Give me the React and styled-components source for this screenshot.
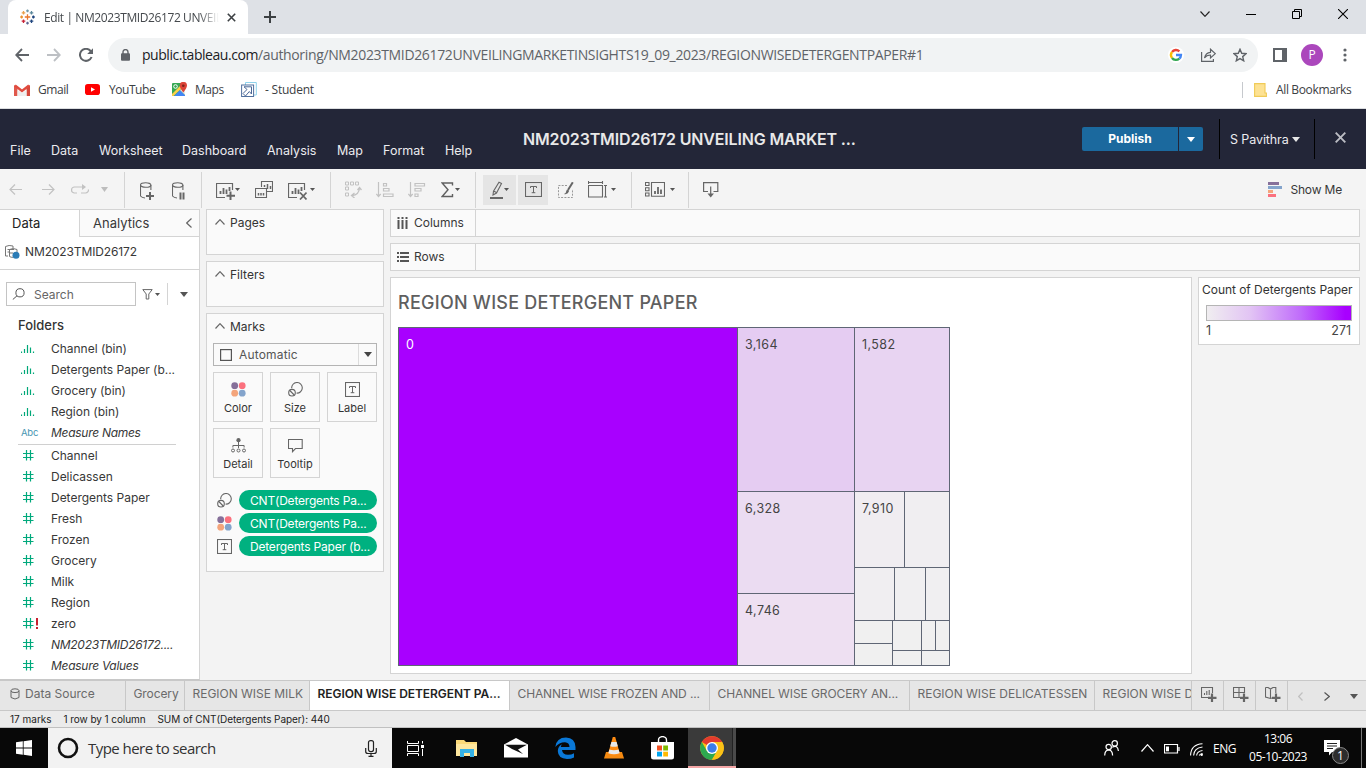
import React from "react";
import styled, { createGlobalStyle, css } from "styled-components";

const ui = '"Open Sans", "Noto Sans", sans-serif';
const body = 'Inter, "Liberation Sans", sans-serif';

const Global = createGlobalStyle`
  *, *::before, *::after { box-sizing: border-box; }
  html, body { margin: 0; padding: 0; overflow: hidden; }
  body { font-family: ${body}; font-size: 12px; color: #383838; background: #f3f3f3; }
  svg { display: block; flex: none; }
`;

const Page = styled.div`
  width: 1366px; height: 768px; overflow: hidden;
  display: flex; flex-direction: column;
`;
const Spacer = styled.div`flex: 1;`;
const Text = styled.span`
  white-space: pre;
  letter-spacing: ${(p) => p.$ls || 0}px;
`;
const Slot = styled.span`
  flex: none; display: flex; align-items: center;
  margin-left: ${(p) => p.$l || 0}px;
  padding-top: ${(p) => p.$t || 0}px;
`;

function Icon({ w, h, children, ...rest }) {
  return <svg width={w} height={h} viewBox={`0 0 ${w} ${h}`} fill="none" {...rest}>{children}</svg>;
}

/* ---------- browser chrome ---------- */
const TabStrip = styled.div`
  flex: none; height: 34px; background: #dee1e6; display: flex; align-items: flex-start; font-family: ${ui};
`;
const BrowserTab = styled.div`
  width: 240px; height: 34px; margin-left: 8px; padding-left: 12px;
  background: #fff; border-radius: 8px 8px 0 0; display: flex; align-items: center;
  font-size: 12px; color: #45494d;
`;
const TabTitle = styled.div`
  margin-left: 9px; width: 176px; overflow: hidden; white-space: pre; letter-spacing: -0.4px;
  mask-image: linear-gradient(90deg, #000 155px, transparent 175px);
`;
const AddressRow = styled.div`
  flex: none; height: 41px; background: #fff; display: flex; align-items: center;
`;
const Omnibox = styled.div`
  width: 1150px; height: 34px; margin-left: 14px; border-radius: 17px; background: #f1f3f4;
  display: flex; align-items: center; padding-left: 13px; font: 14px ${ui}; color: #5f6368;
  b { font-weight: 400; color: #202124; letter-spacing: -0.45px; }
`;
const Avatar = styled.div`
  width: 22px; height: 22px; border-radius: 50%; background: #ab47bc; color: #fff;
  display: flex; align-items: center; justify-content: center; font: 12px ${ui};
  margin-left: 14px;
`;
const Bookmarks = styled.div`
  flex: none; height: 34px; background: #fff; border-bottom: 1px solid #dcdee0;
  display: flex; align-items: center; padding-bottom: 4px; font: 12px ${ui}; color: #3c4043;
`;
const Bookmark = styled.div`
  display: flex; align-items: center; gap: ${(p) => p.$gap}px; margin-left: ${(p) => p.$l || 0}px;
  width: ${(p) => p.$w}px; letter-spacing: ${(p) => p.$ls || -0.45}px; white-space: pre;
`;
const VLine = styled.div`
  flex: none; width: 1px; height: ${(p) => p.$h}px; background: ${(p) => p.$c || "#d4d4d4"};
  margin-left: ${(p) => p.$l || 0}px; margin-right: ${(p) => p.$r || 0}px;
`;

/* ---------- app header ---------- */
const Header = styled.header`
  flex: none; height: 60px; background: #232638; color: #ececf0; display: flex;
`;
const Menu = styled.nav`
  display: flex; width: 523px; padding: 34px 0 0 10px; font-size: 12.5px; line-height: 16px;
`;
const MenuItem = styled.span`width: ${(p) => p.$w}px;`;
const BookTitle = styled.h1`
  margin: 0; width: 559px; padding-top: 20px; font-size: 16px; line-height: 20px; font-weight: 600;
  letter-spacing: -0.15px; color: #e8e8e8; white-space: pre;
`;
const Publish = styled.button`
  margin: 18px 1px 0 0; padding: 0 0 1px; width: 96px; height: 24px; border: 0; border-radius: 2px 0 0 2px;
  background: #1b699e; color: #fff; font: bold 12px ${body};
`;
const PublishMore = styled.div`
  margin-top: 18px; width: 24px; height: 24px; border-radius: 0 2px 2px 0; background: #1b699e;
  display: flex; align-items: center; justify-content: center;
`;
const User = styled.div`
  width: 96px; height: 40px; margin: 10px 0 0 16px; padding-left: 10px;
  border-left: 1px solid #000; border-right: 1px solid #000;
  display: flex; align-items: center; gap: 3px; font-size: 12.5px; letter-spacing: -0.1px;
`;

/* ---------- toolbar ---------- */
const Toolbar = styled.div`
  flex: none; height: 40px; background: #f4f4f4; display: flex; align-items: center; padding-top: 1px;
`;
const ToolButton = styled.div`
  height: 30px; width: ${(p) => p.$w}px; margin-left: ${(p) => p.$l}px; background: #e5e5e5;
  display: flex; align-items: center; justify-content: center; gap: 1px;
`;

const Caret = ({ w = 5, h = 3, c = "#555" }) => (
  <Icon w={w} h={h}><path d={`M0 0H${w}L${w / 2} ${h}Z`} fill={c} /></Icon>
);

/* ---------- workspace ---------- */
const Workspace = styled.div`flex: none; height: 471px; display: flex; background: #f3f3f3;`;
const DataPane = styled.aside`
  width: 200px; height: 471px; background: #fff; border-right: 1px solid #d4d4d4; border-bottom: 1px solid #c8c8c8;
`;
const PaneTabs = styled.div`display: flex; height: 28px; font-size: 13px;`;
const PaneTab = styled.div`
  display: flex; align-items: center; border-top: 1px solid #d4d4d4;
  ${(p) => p.$active
    ? css`width: 79px; padding: 0 0 1px 12px; color: #222;`
    : css`width: 120px; padding: 0 7px 0 13px; justify-content: space-between; background: #fafafa; border-left: 1px solid #d4d4d4; border-bottom: 1px solid #d4d4d4;`}
`;
const Source = styled.div`
  height: 33px; border-bottom: 1px solid #d4d4d4; display: flex; align-items: center; padding: 0 0 3px 5px; gap: 5px;
`;
const SearchRow = styled.div`display: flex; align-items: center; margin: 12px 0 0 6px; height: 24px;`;
const SearchBox = styled.div`
  width: 130px; height: 24px; border: 1px solid #c4c4c4; display: flex; align-items: center; gap: 9px; padding-left: 5px; color: #666;
`;
const FolderTitle = styled.div`padding: 11px 0 0 18px; font-size: 13px; font-weight: 500; line-height: 16px; height: 32px; color: #333;`;
const Field = styled.div`
  height: 21px; display: flex; align-items: center; font-style: ${(p) => (p.$italic ? "italic" : "normal")};
  letter-spacing: ${(p) => (p.$italic ? -0.28 : -0.02)}px;
`;
const FieldIcon = styled.div`
  width: 51px; padding-left: ${(p) => p.$pad || 23}px; display: flex; gap: 2px; letter-spacing: 0;
`;
const TypeTag = styled.span`font: normal 9.5px ${body}; color: #4996b2; margin-left: -2px; letter-spacing: -0.2px;`;
const Rule = styled.div`height: 1px; width: 158px; background: #d0d0d0; margin: 1px 0 0 18px;`;

const Cards = styled.div`width: 178px; margin-left: 6px; display: flex; flex-direction: column; gap: 6px;`;
const Card = styled.section`
  height: ${(p) => p.$h}px; border: 1px solid #d4d4d4; background: #fafafa;
`;
const CardTitle = styled.div`
  display: flex; align-items: center; gap: 5px; padding: 0 0 2px 8px; height: 26px; color: #333;
`;
const MarkType = styled.div`
  margin: 3px 0 0 6px; width: 164px; height: 23px; border: 1px solid #b4b4b4; display: flex; align-items: center;
  padding-left: 6px; color: #555;
`;
const MarkTypeMore = styled.div`
  margin-left: auto; width: 18px; height: 21px; border-left: 1px solid #dcdcdc; display: flex; align-items: center; justify-content: center;
`;
const MarkGrid = styled.div`
  display: grid; grid-template-columns: repeat(3, 50px); gap: 6px 7px; margin: 6px 0 0 6px;
`;
const MarkButton = styled.div`
  height: 50px; border: 1px solid #d4d4d4; display: flex; flex-direction: column; align-items: center;
  font-size: 11px; padding-top: 9px; gap: 5px; color: #333; line-height: 13px;
`;
const MarkIcon = styled.div`height: 15px;`;
const Pills = styled.div`margin: 12px 0 0 10px; display: flex; flex-direction: column; gap: 3px;`;
const PillRow = styled.div`display: flex; align-items: center; height: 20px;`;
const Pill = styled.div`
  margin-left: 7px; width: 138px; height: 20px; border-radius: 10px; background: #00b180; color: #fff;
  line-height: 21px; padding-left: 11px; letter-spacing: -0.2px; white-space: pre;
`;

const Stage = styled.main`width: 970px; margin-left: 6px; display: flex; flex-direction: column; gap: 6px;`;
const Shelf = styled.div`height: 28px; border: 1px solid #d4d4d4; background: #fafafa; display: flex;`;
const ShelfLabel = styled.div`
  width: 85px; border-right: 1px solid #d4d4d4; display: flex; align-items: center; gap: 5px; padding: 0 0 1px 6px;
`;
const StageRow = styled.div`display: flex; gap: 6px;`;
const Viz = styled.section`width: 802px; height: 397px; background: #fff; border: 1px solid #d4d4d4; padding: 0 0 0 7px;`;
const VizTitle = styled.h2`
  margin: 0; height: 49px; padding: 14px 0 0 0; font-size: 18px; line-height: 22px; font-weight: 500; color: #5f5f5f; letter-spacing: 0.25px;
`;
const Legend = styled.section`
  width: 162px; height: 68px; background: #fff; border: 1px solid #d4d4d4; padding: 4px 7px 0 3px; white-space: pre; line-height: 16px; color: #333;
  letter-spacing: -0.04px;
`;
const Ramp = styled.div`
  margin: 7px 0 0 4px; width: 146px; height: 16px; border: 1px solid #b5b5b5;
  background: linear-gradient(90deg, #f0eef0, #e2c4f4 30%, #c06cfb 65%, #a800ff 96%);
`;
const RampEnds = styled.div`display: flex; justify-content: space-between; margin: 2px 1px 0 4px; font-size: 12.5px; color: #444;`;

/* ---------- sheet tabs and status ---------- */
const Sheets = styled.div`flex: none; height: 31px; display: flex; background: #e6e6e6; border-top: 1px solid #c8c8c8; border-bottom: 1px solid #c8c8c8;`;
const Sheet = styled.div`
  flex: none; width: ${(p) => p.$w}px; border-right: ${(p) => (p.$last ? 0 : 1)}px solid #c8c8c8; padding: 4px 0 0 7.5px; line-height: 17px;
  overflow: hidden; white-space: pre; color: #6a6a6a; letter-spacing: ${(p) => p.$ls || 0}px;
  ${(p) => p.$active && css`background: #fff; color: #222; font-weight: 600;`}
  ${(p) => p.$source && css`display: flex; align-items: flex-start; gap: 5px; padding-left: 10px;`}
`;
const NewSheet = styled.div`
  width: 32px; border-left: 1px solid #c8c8c8; display: flex; padding: 6px 0 0 9px;
`;
const SheetNav = styled.div`width: 78px; border-left: 1px solid #c8c8c8; display: flex; align-items: center; padding: 1px 0 0 10px;`;
const Status = styled.div`
  flex: none; height: 17px; background: #ebebeb; border-bottom: 1px solid #c0c0c0; display: flex; align-items: center; font-size: 10px; padding-left: 10px; color: #222;
`;

/* ---------- taskbar ---------- */
const Taskbar = styled.footer`flex: none; height: 40px; background: #080808; display: flex; align-items: center; color: #fff; font: 12px ${ui};`;
const Start = styled.div`width: 48px; display: flex; justify-content: center;`;
const TaskSearch = styled.div`
  width: 344px; height: 40px; background: #f2f2f2; color: #333; font-size: 15px; letter-spacing: -0.55px;
  display: flex; align-items: center; padding: 0 15px 0 9px;
`;
const ActiveTask = styled.div`
  width: 48px; height: 40px; margin-left: 13px; background: linear-gradient(90deg, #3a3a3a 44px, #222 44px, #222 45px, #4a4a4a 45px);
  border-bottom: 2px solid #f4a6a6; display: flex; align-items: center; justify-content: center; padding-top: 2px;
`;
const Clock = styled.div`
  width: 66px; margin-left: 9px; text-align: center; line-height: 18px; letter-spacing: -0.47px;
`;
const Notice = styled.div`position: relative; margin-left: 13px; width: 37px; height: 40px; padding-top: 12px;`;
const NoticeCount = styled.div`
  position: absolute; left: 8px; top: 19px; width: 17px; height: 17px; border-radius: 50%; background: #2d2d2d;
  border: 1px solid #8a8a8a; font-size: 12px; line-height: 15px; text-align: center;
`;

/* ---------- drawings ---------- */
const TableauMark = () => {
  const plus = (x, y, r, c, k) => <path key={k} d={`M${x - r} ${y}H${x + r}M${x} ${y - r}V${y + r}`} stroke={c} strokeWidth="1.3" />;
  return (
    <Icon w={15} h={16}>
      {plus(7.5, 8, 2.7, "#e8762c", 0)}
      {plus(3.5, 3.8, 1.8, "#e8a04c", 1)}{plus(11.5, 3.8, 1.8, "#5b879b", 2)}
      {plus(3.5, 12.2, 1.8, "#c72035", 3)}{plus(11.5, 12.2, 1.8, "#1f457e", 4)}
      {plus(7.5, 1.8, 1.4, "#7199a6", 5)}{plus(7.5, 14.2, 1.4, "#5c6692", 6)}
      {plus(1.6, 8, 1.4, "#eb912c", 7)}{plus(13.4, 8, 1.4, "#1f457e", 8)}
    </Icon>
  );
};
const Chevron = ({ c = "#666", dir = "up", w = 9, h = 5 }) => {
  const d = { up: `M.5 ${h - 0.5}L${w / 2} .7L${w - 0.5} ${h - 0.5}`, left: `M${w - 0.5} .5L.7 ${h / 2}L${w - 0.5} ${h - 0.5}`, right: `M.5 .5L${w - 0.7} ${h / 2}L.5 ${h - 0.5}`, down: `M.5 .5L${w / 2} ${h - 0.7}L${w - 0.5} .5` };
  return <Icon w={w} h={h}><path d={d[dir]} stroke={c} strokeWidth="1.2" /></Icon>;
};
const DotsColor = () => (
  <Icon w={15} h={15}>
    <circle cx="3.7" cy="3.7" r="3.4" fill="#86709a" /><circle cx="11.2" cy="3.7" r="3.4" fill="#fb717e" />
    <circle cx="3.7" cy="11.2" r="3.4" fill="#f4a57c" /><circle cx="11.2" cy="11.2" r="3.4" fill="#84a4cc" />
  </Icon>
);
const SizeMark = () => (
  <Icon w={15} h={15} stroke="#666" strokeWidth="1.1">
    <path d="M3.7 6.2A5.3 5.3 0 1 1 8.6 11.1" /><circle cx="4" cy="10.7" r="3.3" /><path d="M1.8 8.5L6.2 13" />
  </Icon>
);
const LabelMark = ({ w = 15, h = 15 }) => (
  <Icon w={w} h={h} stroke="#666">
    <rect x=".5" y=".5" width={w - 1} height={h - 1} strokeWidth="1.1" />
    <path d={`M${w / 2 - 3} ${h / 2 - 1.5}V${h / 2 - 3}H${w / 2 + 3}V${h / 2 - 1.5}M${w / 2} ${h / 2 - 3}V${h / 2 + 3.4}M${w / 2 - 1.8} ${h / 2 + 3.2}H${w / 2 + 1.8}`} />
  </Icon>
);
const DetailMark = () => (
  <Icon w={15} h={15} stroke="#666">
    <circle cx="7.5" cy="2.2" r="2.1" fill="#666" stroke="none" />
    <path d="M7.5 4V10M1.9 9.5V7.5H13.1V9.5" />
    <circle cx="2" cy="12.5" r="1.5" /><circle cx="7.5" cy="12.5" r="1.5" /><circle cx="13" cy="12.5" r="1.5" />
  </Icon>
);
const TooltipMark = () => (
  <Icon w={15} h={15} stroke="#666" strokeWidth="1.1"><path d="M.5 1.5H14.2V10.5H7.5L4.5 13.7V10.5H.5Z" /></Icon>
);
const BinMark = () => (
  <Icon w={14} h={9}><path d="M.5 7.5V9M3.5 5V9M6.5 1V9M9.5 3.5V9M12.5 7.5V9" stroke="#00a878" strokeWidth="1.2" /></Icon>
);
const Hash = () => (
  <Icon w={11} h={11}><path d="M3.5 0V10.5M7.5 0V10.5M0 3.5H10.5M0 7.5H10.5" stroke="#00a97c" strokeWidth="1.2" /></Icon>
);
const Cylinder = ({ extra }) => (
  <Icon w={15} h={18} stroke="#666" strokeWidth="1.1">
    <ellipse cx="5.7" cy="3" rx="5.2" ry="2.3" /><path d="M.5 3V14Q2 15.7 5 16M10.9 3V8" />{extra}
  </Icon>
);
const ChartBox = ({ extra, w = 19 }) => (
  <Icon w={w} h={18} stroke="#666">
    <path d="M9 15.5H.5V1.5H16.5V8" strokeWidth="1.2" />
    <path d="M4.5 12V9M7.5 12V6M10.5 12V7.5M13.5 9V5" strokeWidth="1.8" />{extra}
  </Icon>
);
const NewMark = ({ kind }) => (
  <Icon w={16} h={15} stroke="#666" strokeWidth="1.1">
    {kind === "sheet" && <path d="M11.5 6V.5H.5V10.5H7M3.5 8V6M5.8 8V4M8.2 8V3" />}
    {kind === "board" && <path d="M11.5 6V.5H.5V10.5H7M.5 5.5H11M6 .5V10.5" />}
    {kind === "story" && <path d="M.5 .5V10L5.5 11.5L7 11M5.5 2V11M.5 .5H3L5.5 2L8 .5H10.8V6" />}
    <path d="M11 6.5V15M7 10.8H15.5" strokeWidth="2.2" />
  </Icon>
);
const Chrome = () => (
  <svg width="24" height="24" viewBox="0 0 48 48">
    <circle cx="24" cy="24" r="23.5" fill="#fbc116" />
    <path d="M24 24L3.6 12.2A23.5 23.5 0 0 1 44.4 12.2L24 12.2Z" fill="#e33b2e" />
    <path d="M3.6 12.2A23.5 23.5 0 0 0 24 47.5L34.2 29.9L24 24L13.8 29.9Z" fill="#2da94f" />
    <path d="M24 12.2H44.4A23.5 23.5 0 0 1 24 47.5L34.2 29.9Z" fill="#fbc116" />
    <circle cx="24" cy="24" r="12" fill="#fff" /><circle cx="24" cy="24" r="9.4" fill="#3b7de9" />
  </svg>
);

/* ---------- data ---------- */
const menu = [["File", 41], ["Data", 48], ["Worksheet", 83], ["Dashboard", 85], ["Analysis", 70], ["Map", 46], ["Format", 62], ["Help", 40]];
const bins = ["Channel (bin)", "Detergents Paper (b...", "Grocery (bin)", "Region (bin)"];
const measures = ["Channel", "Delicassen", "Detergents Paper", "Fresh", "Frozen", "Grocery", "Milk", "Region", "zero", "NM2023TMID26172....", "Measure Values"];
const cells = [
  [0, 0, 339, 338, "#a800ff", "0"],
  [339, 0, 117, 164, "#e5ccf2", "3,164"], [456, 0, 95, 164, "#e8d4f2", "1,582"],
  [339, 164, 117, 102, "#ebdcf2", "6,328"], [339, 266, 117, 72, "#eee0f2", "4,746"],
  [456, 164, 50, 76, "#f0edf1", "7,910"], [506, 164, 45, 76, "#f0eef1"],
  [456, 240, 40, 53, "#f0eef1"], [496, 240, 31, 53, "#f0eff1"], [527, 240, 24, 53, "#f0eff1"],
  [456, 293, 38, 23], [456, 316, 38, 22], [494, 293, 29, 30], [494, 323, 29, 15],
  [523, 293, 14, 30], [537, 293, 14, 30], [523, 323, 28, 15],
];
const sheets = [
  ["Grocery", 59, -0.1], ["REGION WISE MILK", 125, -0.02], ["REGION WISE DETERGENT PA...", 200, -0.06, true],
  ["CHANNEL WISE FROZEN AND ...", 200, -0.12], ["CHANNEL WISE GROCERY AN...", 200, -0.1], ["REGION WISE DELICATESSEN", 185, -0.02],
];

export default function App() {
  return (
    <Page>
      <Global />
      <TabStrip>
        <BrowserTab>
          <TableauMark />
          <TabTitle>Edit | NM2023TMID26172 UNVEILING</TabTitle>
          <Slot $l={7}><Icon w={9} h={9}><path d="M.8 .8L8.2 8.2M8.2 .8L.8 8.2" stroke="#3c4043" strokeWidth="1.6" /></Icon></Slot>
        </BrowserTab>
        <Slot $l={16} $t={11}><Icon w={12} h={12}><path d="M6 0V12M0 6H12" stroke="#3c4043" strokeWidth="2" /></Icon></Slot>
        <Spacer />
        <Slot $t={11}><Chevron dir="down" w={10} h={6} c="#222" /></Slot>
        <Slot $l={36} $t={14}><Icon w={10} h={1}><path d="M0 .5H10" stroke="#000" /></Icon></Slot>
        <Slot $l={36} $t={9}><Icon w={10} h={10} stroke="#000"><path d="M.5 2.5H7.5V9.5H.5ZM2.5 2.5V.5H9.5V7.5H7.5" /></Icon></Slot>
        <Slot $l={36} $t={9}><Icon w={10} h={10} stroke="#000"><path d="M0 0L10 10M10 0L0 10" strokeWidth="1.1" /></Icon></Slot>
        <Slot $l={18} />
      </TabStrip>

      <AddressRow>
        <Slot $l={15}><Icon w={14} h={14} stroke="#5f6368" strokeWidth="1.8"><path d="M14 7H1.5M7 1L1.2 7L7 13" /></Icon></Slot>
        <Slot $l={18}><Icon w={14} h={14} stroke="#bdc0c4" strokeWidth="1.8"><path d="M0 7H12.5M7 1L12.8 7L7 13" /></Icon></Slot>
        <Slot $l={18}><Icon w={15} h={14} stroke="#5f6368" strokeWidth="2"><path d="M12.6 9A6 6 0 1 1 11.6 3L13 4.5" /><path d="M14 .2V6H8.2Z" fill="#5f6368" stroke="none" /></Icon></Slot>
        <Omnibox>
          <Icon w={9} h={12}><rect x="0" y="4.3" width="9" height="7.5" rx="1" fill="#5f6368" /><path d="M2 5V3A2.5 2.4 0 0 1 7 3V5" stroke="#5f6368" strokeWidth="1.4" /></Icon>
          <Slot $l={12} /><b>public.tableau.com</b>
          <Text $ls={-0.35}>/authoring/NM2023TMID26172UNVEILINGMARKETINSIGHTS19_09_2023/REGIONWISEDETERGENTPAPER#1</Text>
          <Spacer />
          <svg width="16" height="16" viewBox="0 0 16 16"><circle cx="8" cy="8" r="8" fill="#fff" />
            <g fill="none" strokeWidth="2.3"><path d="M4 5A5 5 0 0 1 11.4 4.3" stroke="#ea4335" /><path d="M4 5A5 5 0 0 0 4 11" stroke="#fbbc05" /><path d="M4 11A5 5 0 0 0 11.3 11.7" stroke="#34a853" /><path d="M11.3 11.7A5 5 0 0 0 13 8H8" stroke="#4285f4" /></g>
          </svg>
          <Slot $l={17}><Icon w={15} h={14} stroke="#5f6368" strokeWidth="1.2"><path d="M.6 4V13.4H12.4V11M3.5 10Q4.5 4.7 9.5 4.3V1.2L14.3 5.6L9.5 10V7Q5.5 7 3.5 10Z" /></Icon></Slot>
          <Slot $l={17}><Icon w={14} h={14} stroke="#5f6368" strokeWidth="1.4"><path d="M7 1.3L8.7 5.3L13 5.7L9.7 8.6L10.7 12.8L7 10.6L3.3 12.8L4.3 8.6L1 5.7L5.3 5.3Z" /></Icon></Slot>
          <Slot $l={11} />
        </Omnibox>
        <Slot $l={15}><Icon w={14} h={14}><path d="M1 1H13V13H1Z" stroke="#5f6368" strokeWidth="2" /><path d="M9 0H14V14H9Z" fill="#5f6368" /></Icon></Slot>
        <Avatar>P</Avatar>
        <Slot $l={20}><Icon w={4} h={14} fill="#5f6368"><circle cx="2" cy="2" r="1.6" fill="#5f6368" /><circle cx="2" cy="7" r="1.6" fill="#5f6368" /><circle cx="2" cy="12" r="1.6" fill="#5f6368" /></Icon></Slot>
      </AddressRow>

      <Bookmarks>
        <Bookmark $l={14} $w={71} $gap={8}>
          <Icon w={16} h={12}><path d="M0 1V12H3.5V3Z" fill="#e0584c" /><path d="M16 1V12H12.5V3Z" fill="#d5473b" /><path d="M3.5 6V12H12.5V6L8 9Z" fill="#eee" /><path d="M1 1.5L8 7L15 1.5" stroke="#e04b3e" strokeWidth="2.4" /></Icon>Gmail
        </Bookmark>
        <Bookmark $w={87} $gap={9}>
          <Icon w={15} h={11}><rect width="15" height="11" rx="2.8" fill="#f00" /><path d="M6 3.2L10 5.5L6 7.8Z" fill="#fff" /></Icon>YouTube
        </Bookmark>
        <Bookmark $w={69} $gap={8}>
          <Icon w={15} h={15}><rect y="1" width="13" height="13" rx="1" fill="#34a853" /><path d="M2 14L8 8L13 13V14Z" fill="#4285f4" /><path d="M8 8L11 5L13 8V13Z" fill="#e8e8e8" /><path d="M0 12L10 2L12 4L1.5 14H0Z" fill="#fbd04a" /><circle cx="3.5" cy="4.5" r="1.8" stroke="#fff" /><path d="M11.3 10.5Q7.7 6 7.7 3.6A3.6 3.6 0 0 1 15 3.6Q15 6 11.3 10.5Z" fill="#dc4437" /><circle cx="11.3" cy="3.7" r="1.3" fill="#7c231c" /></Icon>Maps
        </Bookmark>
        <Bookmark $w={90} $gap={8} $ls={-0.22}>
          <Icon w={16} h={15}><path d="M4.5 3V.5H15.3V13H13" stroke="#8fd3ec" /><rect x=".6" y="3" width="12" height="11.5" stroke="#51709e" /><path d="M3 4.8H10.5V12L8.3 9.5L4.5 14L2 11.5L6 7.5Z" stroke="#4b6898" /></Icon>- Student
        </Bookmark>
        <Spacer />
        <VLine $h={16} $c="#c6c9cd" $r={11} />
        <Icon w={13} h={14}><path d="M.6 .6H11V10H12.4V13.4H.6Z" fill="#fde293" stroke="#f0cb57" strokeWidth="1.1" /></Icon>
        <Bookmark $l={9} $w={90} $gap={0}><Text $ls={-0.36}>All Bookmarks</Text></Bookmark>
      </Bookmarks>

      <Header>
        <Menu>{menu.map(([t, w]) => <MenuItem key={t} $w={w}>{t}</MenuItem>)}</Menu>
        <BookTitle>NM2023TMID26172 UNVEILING MARKET ...</BookTitle>
        <Publish>Publish</Publish>
        <PublishMore><Caret w={8} h={5} c="#fff" /></PublishMore>
        <User>S Pavithra<Caret w={8} h={5} c="#e8e8e8" /></User>
        <Slot $l={20} $t={-2}><Icon w={11} h={14}><path d="M.7 .7L10.3 10.3M10.3 .7L.7 10.3" stroke="#bcbdc4" strokeWidth="1.9" /></Icon></Slot>
      </Header>

      <Toolbar>
        <Slot $l={9}><Icon w={13} h={11} stroke="#c2c2c2"><path d="M13 5.5H1M6 .5L1 5.5L6 10.5" strokeWidth="1.2" /></Icon></Slot>
        <Slot $l={20}><Icon w={13} h={11} stroke="#c2c2c2"><path d="M0 5.5H12M7 .5L12 5.5L7 10.5" strokeWidth="1.2" /></Icon></Slot>
        <Slot $l={16}><Icon w={18} h={11} stroke="#c2c2c2" strokeWidth="1.2"><path d="M6 9H3.5A3 3 0 0 1 3.5 3H14M10 9H14.5A2.8 2.8 0 0 0 17.3 5.5" /><path d="M11 0L15 3L11 6Z" fill="#c2c2c2" stroke="none" /></Icon></Slot>
        <Slot $l={12}><Caret w={7} h={5} c="#bdbdbd" /></Slot>
        <VLine $h={36} $l={16} />
        <Slot $l={15} $t={3}><Cylinder extra={<path d="M10 10V18M6 14H14" strokeWidth="2" />} /></Slot>
        <Slot $l={17} $t={3}><Cylinder extra={<path d="M8.5 10.5V17.5M11.5 10.5V17.5" strokeWidth="2" />} /></Slot>
        <VLine $h={36} $l={14} />
        <Slot $l={14} $t={3}><ChartBox extra={<path d="M14.5 9.5V18M10.5 13.8H19" strokeWidth="2" />} /></Slot>
        <Slot><Caret /></Slot>
        <Slot $l={15}><Icon w={18} h={17} stroke="#666"><path d="M6.5 6V.5H17.5V10.5H12M.5 7.5H11.5V16.5H.5Z" strokeWidth="1.1" /><path d="M9.5 4V6M12.5 3V8M15.5 5V8M3.5 12V14.5M6 12V14.5M8.5 12V14.5" strokeWidth="1.5" /></Icon></Slot>
        <Slot $l={15} $t={3}><ChartBox extra={<path d="M12 10.5L18.5 17.5M18.5 10.5L12 17.5" strokeWidth="1.7" />} /></Slot>
        <Slot $l={3}><Caret /></Slot>
        <VLine $h={36} $l={15} />
        <Slot $l={14}><Icon w={17} h={17} stroke="#c2c2c2"><path d="M.5 1H3.5V4H.5ZM5.5 1H8.5V4H5.5ZM10.5 1H13.5V4H10.5ZM.5 6H3.5V9H.5ZM.5 12H3.5V15H.5Z" /><path d="M7 14.5Q14 14 14.5 7M12.5 9L14.5 6.5L16.5 9M9.5 12L6.5 14.5L9.5 17" strokeWidth="1.3" /></Icon></Slot>
        <Slot $l={14}><Icon w={18} h={16} stroke="#c2c2c2" strokeWidth="1.2"><path d="M2.5 0V14M.3 12L2.5 14.5L4.7 12M7.5 1.5H10.5V4H7.5ZM7.5 6.5H13V9H7.5ZM7.5 12H17V14.5H7.5Z" /></Icon></Slot>
        <Slot $l={14}><Icon w={18} h={16} stroke="#c2c2c2" strokeWidth="1.2"><path d="M2.5 0V14M.3 12L2.5 14.5L4.7 12M7 1.5H16.5V4H7ZM7 6.5H13V9H7ZM7 12H10V14.5H7Z" /></Icon></Slot>
        <Slot $l={15}><Icon w={13} h={16}><path d="M11.5 3.5V1H1.2L7 7.7L1.2 14.5H11.5V12" stroke="#606060" strokeWidth="1.4" /></Icon></Slot>
        <Slot $l={1}><Caret /></Slot>
        <VLine $h={36} $l={15} />
        <ToolButton $w={33} $l={7}>
          <Icon w={13} h={18} stroke="#666"><path d="M9 1.2L11.5 2.5L6.5 12L3 14L3.5 10.3ZM3.7 10L6.7 11.7M4.5 13" strokeWidth="1.1" /><path d="M0 17H13" strokeWidth="2" /></Icon><Caret />
        </ToolButton>
        <ToolButton $w={30} $l={2}><LabelMark w={17} h={15} /></ToolButton>
        <Slot $l={10}><Icon w={16} h={16} stroke="#666"><path d="M9 3.5H.5V15.5H14.5V7" strokeDasharray="2 1.3" stroke="#999" /><path d="M14.8 .3L10 8" strokeWidth="2" /><path d="M11.2 8.6Q10 13 6 12Q8.2 11.2 8.8 7.8Z" fill="#666" stroke="none" /></Icon></Slot>
        <Slot $l={14}><Icon w={19} h={17} stroke="#666" strokeWidth="1.1"><path d="M.5 4.5H14.5V16H.5ZM.5 0V3M14.5 0V3M.5 1.5H14.5M16 4.5H19M16 16H19M17.5 4.5V16" /></Icon></Slot>
        <Slot $l={4}><Caret /></Slot>
        <VLine $h={36} $l={15} />
        <Slot $l={13}><Icon w={20} h={15} stroke="#666" strokeWidth="1.1"><path d="M.5 .5H4V3.5H.5ZM.5 5.8H4V8.8H.5ZM.5 11H4V14H.5ZM6.5 .5H19.5V14.2H6.5Z" /><path d="M10 12V9M13 12V5M16 12V7.5" strokeWidth="1.8" /></Icon></Slot>
        <Slot $l={5}><Caret /></Slot>
        <VLine $h={36} $l={13} />
        <Slot $l={14}><Icon w={16} h={16} stroke="#666" strokeWidth="1.2"><path d="M5 9.5H.6V.6H14.8V9.5H10.5M7.7 4.5V12" /><path d="M4.5 11.5H11L7.7 15.5Z" fill="#666" stroke="none" /></Icon></Slot>
        <Spacer />
        <Icon w={14} h={15}><path d="M0 1.5H11" stroke="#86709a" strokeWidth="3" /><path d="M0 5.5H14" stroke="#84a4cc" strokeWidth="3" /><path d="M0 9.5H5" stroke="#f4a57c" strokeWidth="3" /><path d="M0 13.5H8" stroke="#fb717e" strokeWidth="3" /></Icon>
        <Slot $l={8} /><Text $ls={-0.17}>Show Me</Text><Slot $l={24} />
      </Toolbar>

      <Workspace>
        <DataPane>
          <PaneTabs>
            <PaneTab $active>Data</PaneTab>
            <PaneTab>Analytics<Chevron dir="left" w={6} h={10} /></PaneTab>
          </PaneTabs>
          <Source>
            <Icon w={15} h={14} stroke="#777"><path d="M3 11H.5V1.5Q4 -.3 8 1V3" /><path d="M2.5 4.5H9M2.5 7H5M4.5 4.5Q8 2.5 12 4.5V7M4.5 4.5V11.5Q6 12.5 8 12.3M4.5 8H8" /><circle cx="11" cy="10.2" r="3.5" fill="#2b7bb5" stroke="none" /></Icon>
            <Text $ls={-0.12}>NM2023TMID26172</Text>
          </Source>
          <SearchRow>
            <SearchBox><Icon w={13} h={12} stroke="#555"><circle cx="8" cy="4.8" r="4.1" /><path d="M5 7.8L.8 11.5" /></Icon>Search</SearchBox>
            <Slot $l={6}><Icon w={11} h={11} stroke="#666"><path d="M.8 .6H10.2L6.8 5V10H4.2V5Z" /></Icon></Slot>
            <Slot $l={2}><Caret w={5} h={3} /></Slot>
            <VLine $h={22} $l={7} />
            <Slot $l={12}><Caret w={8} h={5} /></Slot>
          </SearchRow>
          <FolderTitle>Folders</FolderTitle>
          {bins.map((t) => <Field key={t}><FieldIcon $pad={21}><BinMark /></FieldIcon>{t}</Field>)}
          <Field $italic><FieldIcon><TypeTag>Abc</TypeTag></FieldIcon>Measure Names</Field>
          <Rule />
          {measures.map((t, i) => (
            <Field key={t} $italic={i > 8}>
              <FieldIcon><Hash />{t === "zero" && <Icon w={3} h={11}><path d="M1 0V7.5M1 9V11" stroke="#c8202f" strokeWidth="2" /></Icon>}</FieldIcon>{t}
            </Field>
          ))}
        </DataPane>

        <Cards>
          <Card $h={46}><CardTitle><Chevron w={10} h={6} />Pages</CardTitle></Card>
          <Card $h={46}><CardTitle><Chevron w={10} h={6} />Filters</CardTitle></Card>
          <Card $h={259}>
            <CardTitle><Chevron w={10} h={6} />Marks</CardTitle>
            <MarkType>
              <Icon w={12} h={12}><rect x=".6" y=".6" width="10.8" height="10.8" stroke="#555" strokeWidth="1.2" /></Icon>
              <Slot $l={7} /><Text $ls={0.17}>Automatic</Text>
              <MarkTypeMore><Caret w={8} h={5} c="#444" /></MarkTypeMore>
            </MarkType>
            <MarkGrid>
              <MarkButton><MarkIcon><DotsColor /></MarkIcon>Color</MarkButton>
              <MarkButton><MarkIcon><SizeMark /></MarkIcon>Size</MarkButton>
              <MarkButton><MarkIcon><LabelMark /></MarkIcon>Label</MarkButton>
              <MarkButton><MarkIcon><DetailMark /></MarkIcon>Detail</MarkButton>
              <MarkButton><MarkIcon><TooltipMark /></MarkIcon>Tooltip</MarkButton>
            </MarkGrid>
            <Pills>
              <PillRow><SizeMark /><Pill>CNT(Detergents Pa...</Pill></PillRow>
              <PillRow><DotsColor /><Pill>CNT(Detergents Pa...</Pill></PillRow>
              <PillRow><LabelMark /><Pill>Detergents Paper (b...</Pill></PillRow>
            </Pills>
          </Card>
        </Cards>

        <Stage>
          <Shelf><ShelfLabel><Icon w={12} h={12}><path d="M1.5 0V2M5.5 0V2M9.5 0V2M1.5 3V12M5.5 3V12M9.5 3V12" stroke="#555" strokeWidth="2" /></Icon>Columns</ShelfLabel></Shelf>
          <Shelf><ShelfLabel><Icon w={12} h={10}><path d="M0 1H2M0 5H2M0 9H2M3 1H12M3 5H12M3 9H12" stroke="#555" strokeWidth="2" /></Icon>Rows</ShelfLabel></Shelf>
          <StageRow>
            <Viz>
              <VizTitle>REGION WISE DETERGENT PAPER</VizTitle>
              <svg width="552" height="339" viewBox="0 0 552 339">
                {cells.map(([x, y, w, h, fill = "#f0f0f0", label]) => (
                  <g key={`${x}-${y}`}>
                    <rect x={x + 0.5} y={y + 0.5} width={w} height={h} fill={fill} stroke="#5f6675" />
                    {label && <text x={x + 8} y={y + 22} fontSize="12.5" letterSpacing=".4" fill={x ? "#444" : "#fff"}>{label}</text>}
                  </g>
                ))}
              </svg>
            </Viz>
            <Legend>
              Count of Detergents Paper
              <Ramp />
              <RampEnds><span>1</span><span>271</span></RampEnds>
            </Legend>
          </StageRow>
        </Stage>
      </Workspace>

      <Sheets>
        <Sheet $w={126} $source>
          <Slot $t={3}><Icon w={10} h={12} stroke="#666"><ellipse cx="5" cy="2.7" rx="4" ry="1.9" /><path d="M1 2.7V9.5Q5 12.5 9 9.5V2.7" /></Icon></Slot>Data Source
        </Sheet>
        {sheets.map(([t, w, ls, on]) => <Sheet key={t} $w={w} $ls={ls} $active={on}>{t}</Sheet>)}
        <Sheet $w={96} $last>REGION WISE DETERGENT</Sheet>
        <NewSheet><NewMark kind="sheet" /></NewSheet>
        <NewSheet><NewMark kind="board" /></NewSheet>
        <NewSheet><NewMark kind="story" /></NewSheet>
        <SheetNav>
          <Chevron dir="left" w={5} h={9} c="#c0c0c0" />
          <Slot $l={21}><Chevron dir="right" w={6} h={9} c="#555" /></Slot>
          <Slot $l={20} $t={1}><Caret w={8} h={5} /></Slot>
        </SheetNav>
      </Sheets>
      <Status>
        <Text>17 marks</Text><Slot $l={12} />
        <Text $ls={-0.08}>1 row by 1 column</Text><Slot $l={12} />
        <Text $ls={-0.06}>SUM of CNT(Detergents Paper): 440</Text>
      </Status>

      <Taskbar>
        <Start><Icon w={16} h={16}><path d="M0 2.2L6.8 1.3V7.6H0ZM7.6 1.2L16 0V7.6H7.6ZM0 8.4H6.8V14.7L0 13.8ZM7.6 8.4H16V16L7.6 14.8Z" fill="#fff" /></Icon></Start>
        <TaskSearch>
          <Icon w={22} h={22}><circle cx="11" cy="11" r="9" stroke="#111" strokeWidth="2.6" /></Icon>
          <Slot $l={9} />Type here to search<Spacer />
          <Icon w={12} h={17} stroke="#222" strokeWidth="1.2"><rect x="3.5" y=".6" width="5" height="11" rx="2" /><path d="M.7 8V11.5Q.7 13.5 3 13.5H9Q11.3 13.5 11.3 11.5V8M6 13.5V16.5M3.5 16.3H8.5" /></Icon>
        </TaskSearch>
        <Slot $l={15}><Icon w={17} h={15} stroke="#fff"><path d="M.5 0V2.5H11.5V0M.5 4.5H11.5V10.5H.5ZM.5 15V12.5H11.5V15M15.5 0V2.5M15.5 8V15" /><path d="M14 5.5H17" strokeWidth="3" /></Icon></Slot>
        <Slot $l={32}><Icon w={22} h={18}><path d="M0 1H8L10 3H21V17H0Z" fill="#fbd978" /><path d="M0 5H21V17H0Z" fill="#fee79e" /><path d="M4 18V10H18V18H14V14H8V18Z" fill="#35b1e4" /></Icon></Slot>
        <Slot $l={26}><Icon w={24} h={20}><path d="M12 0L24 6.5V19.5H0V6.5Z" fill="#fff" /><path d="M1 6.7H23L14 11.5L19 16L8 11Z" fill="#111" /></Icon></Slot>
        <Slot $l={27}><Icon w={21} h={22}><path d="M.3 10Q1.5 .5 11 .5Q20 .7 20.5 10V13H7Q7.5 17.5 13 17.8Q16.5 17.8 19 16.3V20.5Q16 22 12 22Q3 21.5 2.8 14Q3 9 7.3 7.3Q5.8 8.5 5.8 10H14.5Q14.3 5.5 10 5.2Q4 5.2 .3 10Z" fill="#0a78d7" /></Icon></Slot>
        <Slot $l={28}><Icon w={20} h={22}><path d="M2 15H18L20 21.5H0Z" fill="#f58a11" /><path d="M8.8 0H11.2L16 17Q10 20 4 17Z" fill="#ff8c12" /><path d="M7.4 5H12.6L13.8 9.2Q10 10.5 6.2 9.2ZM5.4 12.4Q10 14 14.6 12.4L15.7 16.2Q10 18.5 4.3 16.2Z" fill="#e9e9e9" /></Icon></Slot>
        <Slot $l={27}><Icon w={23} h={24}><path d="M0 6H23V21Q23 23.5 20.5 23.5H2.5Q0 23.5 0 21Z" fill="#fff" /><path d="M7.5 6V4A4 3.4 0 0 1 15.5 4V6" stroke="#fff" strokeWidth="1.4" /><path d="M6 9.5H11V14.5H6Z" fill="#f25022" /><path d="M12.2 9.5H17V14.5H12.2Z" fill="#7fba00" /><path d="M6 15.7H11V20.5H6Z" fill="#00a4ef" /><path d="M12.2 15.7H17V20.5H12.2Z" fill="#ffb900" /></Icon></Slot>
        <Slot $l={1} /><ActiveTask><Chrome /></ActiveTask>
        <Spacer />
        <Icon w={15} h={16} stroke="#fff" strokeWidth="1.2"><circle cx="4.7" cy="7" r="2.7" /><path d="M.7 15.5Q.8 10 4.7 9.8Q8.4 10 8.6 15.5" /><circle cx="10.7" cy="3.4" r="2.7" /><path d="M8.2 7.3Q13.7 4.5 14.4 11" /></Icon>
        <Slot $l={22}><Chevron w={13} h={8} c="#fff" /></Slot>
        <Slot $l={10} $t={1}><Icon w={16} h={10} stroke="#fff"><path d="M.5 .5H13.5V9H.5ZM15 3V7" strokeWidth="1.2" /><path d="M3.5 2.5V7.3" strokeWidth="3" /></Icon></Slot>
        <Slot $l={10} $t={2}><Icon w={13} h={13} stroke="#fff" strokeWidth="1.1"><path d="M.6 12.5Q.8 1.5 12.5 .8M3.6 12.5Q4 5 12.5 4M6.6 12.5Q7 8.3 12.5 7.5M9.3 12.5Q9.7 11 12.5 10.5" /><circle cx="11.7" cy="11.7" r="1.2" fill="#fff" stroke="none" /></Icon></Slot>
        <Slot $l={10} /><Text $ls={-0.45}>ENG</Text>
        <Clock>13:06<br />05-10-2023</Clock>
        <Notice>
          <Icon w={17} h={16}><path d="M0 0H16V12H8L5 15.5V12H0Z" fill="#fff" /><path d="M3 3.5H13M3 6H13M3 8.5H9" stroke="#222" /></Icon>
          <NoticeCount>1</NoticeCount>
        </Notice>
        <VLine $h={40} $c="#777" $r={4} />
      </Taskbar>
    </Page>
  );
}
